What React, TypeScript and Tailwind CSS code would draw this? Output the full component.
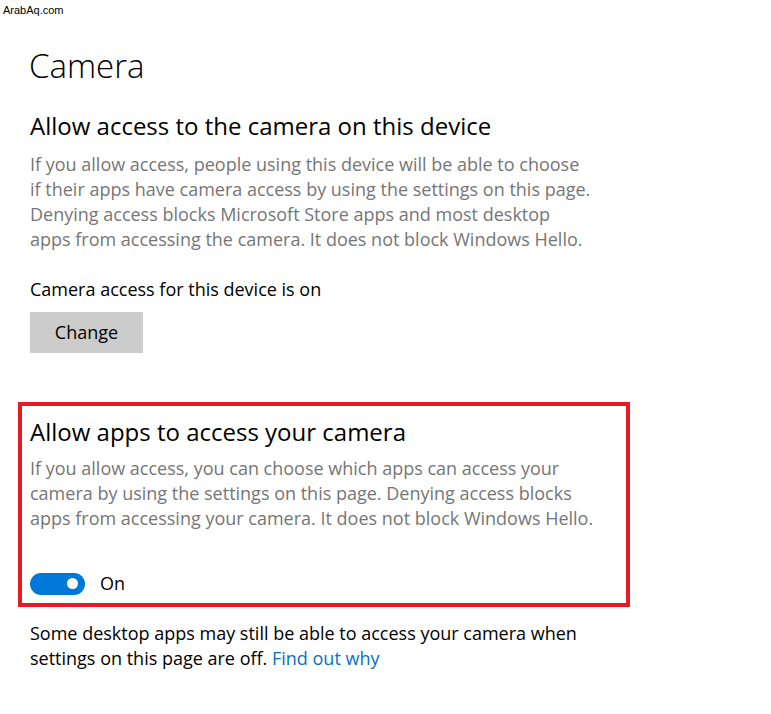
export default function App() {
  return (
    <div className="min-h-screen bg-white text-black" style={{ fontFamily: '"Open Sans", "Noto Sans", sans-serif' }}>
      {/* watermark */}
      <div className="h-[20px] pl-[3px] text-[11px] leading-[20px] font-['Liberation_Sans',sans-serif]">ArabAq.com</div>

      <div className="pl-[29px]">
        <h1 className="mt-[24px] text-[33px] leading-[44px] font-light">Camera</h1>

        <h2 className="mt-[22px] pl-[1px] text-[24px] leading-[32px] font-normal">Allow access to the camera on this device</h2>
        <p className="mt-[10px] pl-[1px] text-[18px] leading-[25px] text-[#767676]">
          If you allow access, people using this device will be able to choose
          <br />
          if their apps have camera access by using the settings on this page.
          <br />
          Denying access blocks Microsoft Store apps and most desktop
          <br />
          apps from accessing the camera. It does not block Windows Hello.
        </p>

        <div className="mt-[25px] pl-[1px] text-[18px] leading-[25px]">Camera access for this device is on</div>
        <button className="mt-[10px] ml-[1px] h-[41px] w-[113px] bg-[#cccccc] text-[18px]">Change</button>
      </div>

      <div className="ml-[18px] mt-[49px] w-[612px] border-4 border-[#e81b24] pl-[8px] pt-[10px] pb-[7px]">
        <h2 className="text-[24px] leading-[32px] font-normal">Allow apps to access your camera</h2>
        <p className="mt-[8px] text-[18px] leading-[25px] text-[#767676]">
          If you allow access, you can choose which apps can access your
          <br />
          camera by using the settings on this page. Denying access blocks
          <br />
          apps from accessing your camera. It does not block Windows Hello.
        </p>
        <div className="mt-[40px] flex items-center gap-[15px]">
          <div className="flex h-[22px] w-[55px] items-center justify-end rounded-full bg-[#0078d7] pr-[7px]">
            <div className="h-[11px] w-[11px] rounded-full bg-white" />
          </div>
          <span className="text-[18px] leading-[25px]">On</span>
        </div>
      </div>

      <p className="mt-[14px] pl-[30px] text-[18px] leading-[25px]">
        Some desktop apps may still be able to access your camera when
        <br />
        settings on this page are off. <a className="text-[#0a6fc2]">Find out why</a>
      </p>
    </div>
  )
}
